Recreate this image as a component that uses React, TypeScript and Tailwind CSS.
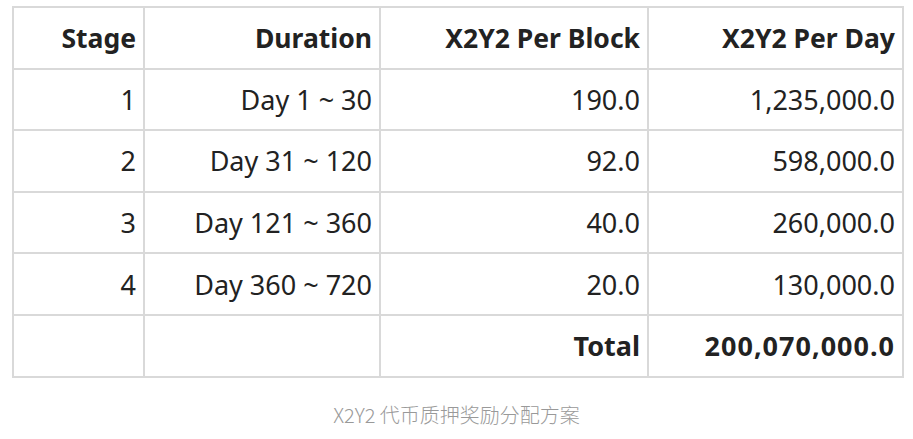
const rows = [
  { stage: "1", duration: "Day 1 ~ 30", perBlock: "190.0", perDay: "1,235,000.0" },
  { stage: "2", duration: "Day 31 ~ 120", perBlock: "92.0", perDay: "598,000.0" },
  { stage: "3", duration: "Day 121 ~ 360", perBlock: "40.0", perDay: "260,000.0" },
  { stage: "4", duration: "Day 360 ~ 720", perBlock: "20.0", perDay: "130,000.0" },
];

const cell = "h-[61.6px] border-2 border-[#d9d9d9] px-[7px] text-right align-middle";

export default function App() {
  return (
    <div className="h-[439px] w-[913px] bg-white font-['Noto_Sans','Noto_Sans_CJK_SC',sans-serif] text-[#222]">
      <div className="pl-[12px] pt-[6px]">
        <table className="w-[890px] table-fixed border-collapse text-[27px] leading-none">
          <colgroup>
            <col className="w-[131px]" />
            <col className="w-[236px]" />
            <col className="w-[268px]" />
            <col className="w-[255px]" />
          </colgroup>
          <thead>
            <tr className="text-[26.5px] font-bold">
              <th className={cell}>Stage</th>
              <th className={cell}>Duration</th>
              <th className={cell}>X2Y2 Per Block</th>
              <th className={cell}>X2Y2 Per Day</th>
            </tr>
          </thead>
          <tbody>
            {rows.map((row) => (
              <tr key={row.stage}>
                <td className={cell}>{row.stage}</td>
                <td className={cell}>{row.duration}</td>
                <td className={cell}>{row.perBlock}</td>
                <td className={cell}>{row.perDay}</td>
              </tr>
            ))}
            <tr className="font-bold">
              <td className={cell}></td>
              <td className={cell}></td>
              <td className={cell}>Total</td>
              <td className={`${cell} tracking-[1px]`}>200,070,000.0</td>
            </tr>
          </tbody>
        </table>
      </div>
      <p className="mt-[22px] text-center font-['Noto_Sans_CJK_SC',sans-serif] text-[20px] font-light text-[#999]">
        X2Y2 代币质押奖励分配方案
      </p>
    </div>
  );
}
